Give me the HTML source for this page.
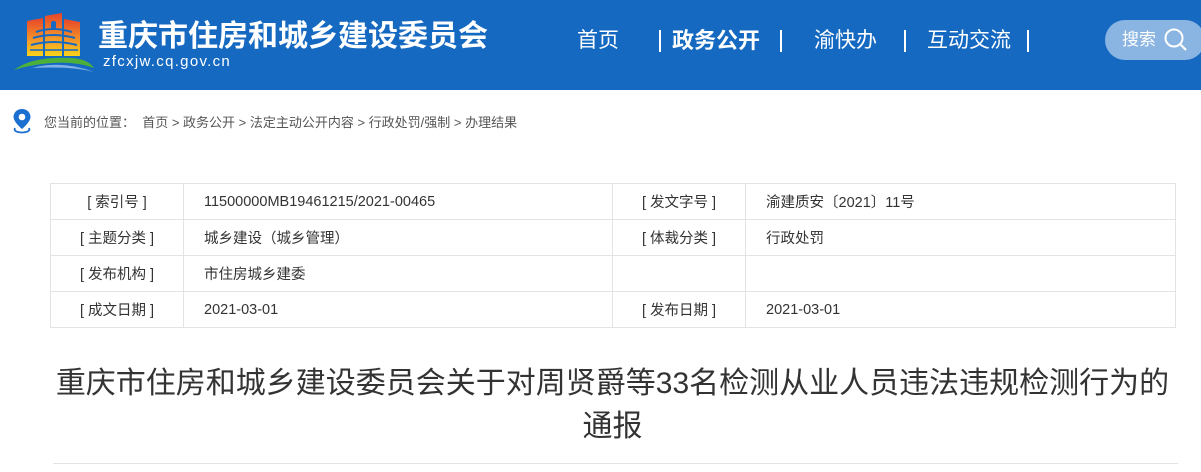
<!DOCTYPE html>
<html><head><meta charset="utf-8"><style>
*{margin:0;padding:0;box-sizing:border-box}
body{width:1201px;height:472px;overflow:hidden;background:#fff;font-family:"Liberation Sans","Noto Sans CJK SC",sans-serif;position:relative}
.hd{position:absolute;left:0;top:0;width:1201px;height:90px;background:#1569c1}
.t1{position:absolute;left:98px;top:17px;color:#fff;font-size:30px;font-weight:bold;white-space:nowrap;line-height:40px}
.t2{position:absolute;left:103px;top:53px;color:#fff;font-size:15px;letter-spacing:1.3px;white-space:nowrap}
.nav{position:absolute;top:27px;color:#fff;font-size:21px;white-space:nowrap;line-height:28px}
.bar{position:absolute;top:30px;width:2px;height:22px;background:#fff}
.srch{position:absolute;left:1105px;top:20px;width:100px;height:40px;border-radius:20px;background:#8ab4e2;color:#fff;font-size:17px;line-height:40px;padding-left:17px}
.bc{position:absolute;left:44px;top:112px;font-size:13px;color:#555;white-space:nowrap}
table{position:absolute;left:50px;top:183px;border-collapse:collapse;font-size:14.5px;color:#333}
td{border:1px solid #e3e3e3;height:36px;padding:0}
td.l{text-align:center}
td.v{padding-left:20px}
h1{position:absolute;left:0;top:362px;width:1225px;text-align:center;font-weight:normal;font-size:30px;line-height:43px;color:#333;white-space:nowrap}
.hr{position:absolute;left:53px;top:463px;width:1125px;height:1px;background:#e3e3e3}
</style></head><body>
<div class="hd">
<svg style="position:absolute;left:12px;top:10px" width="84" height="62" viewBox="0 0 84 62">
<defs><linearGradient id="g" x1="0" y1="0" x2="0" y2="1"><stop offset="0" stop-color="#e8452a"/><stop offset="0.6" stop-color="#f3992a"/><stop offset="1" stop-color="#f9d21a"/></linearGradient></defs>
<path d="M15 11 L31 8 V46 H15 Z" fill="url(#g)"/>
<path d="M33 6 L50 3 V46 H33 Z" fill="url(#g)"/>
<path d="M52 9 L68 12 V46 H52 Z" fill="url(#g)"/>
<rect x="39" y="11" width="5" height="8" rx="2" fill="#1569c1"/>
<path d="M24 22 Q41 16 60 22" stroke="#1569c1" stroke-width="2" fill="none"/>
<path d="M21 28 Q41 22 63 28" stroke="#1569c1" stroke-width="2" fill="none"/>
<path d="M19 35 Q41 29 65 35" stroke="#1569c1" stroke-width="2" fill="none"/>
<path d="M18 40 H66" stroke="#1569c1" stroke-width="1.5"/>
<path d="M2 60 Q20 46 60 48 Q76 49 82 58 Q60 50 30 54 Q14 56 2 60 Z" fill="#4caf3a"/>
<path d="M20 58 Q50 50 82 62 Q60 56 20 58 Z" fill="#7fb0e6"/>
</svg>
<div class="t1">重庆市住房和城乡建设委员会</div>
<div class="t2">zfcxjw.cq.gov.cn</div>
<div class="nav" style="left:577px">首页</div>
<div class="bar" style="left:659px"></div>
<div class="nav" style="left:672px;font-weight:bold;font-size:22px">政务公开</div>
<div class="bar" style="left:780px"></div>
<div class="nav" style="left:814px">渝快办</div>
<div class="bar" style="left:904px"></div>
<div class="nav" style="left:927px">互动交流</div>
<div class="bar" style="left:1027px"></div>
<div class="srch">搜索<svg style="position:absolute;left:58px;top:7px" width="26" height="26" viewBox="0 0 26 26"><circle cx="11" cy="11" r="8.5" stroke="#fff" stroke-width="2" fill="none"/><path d="M17 17 L23 23" stroke="#fff" stroke-width="2.2"/></svg></div>
</div>
<svg style="position:absolute;left:11px;top:108px" width="22" height="26" viewBox="0 0 22 26"><path d="M11 1 C5.5 1 2.5 5 2.5 9 C2.5 14 11 21 11 21 C11 21 19.5 14 19.5 9 C19.5 5 16.5 1 11 1 Z" fill="#1b6fd0"/><circle cx="11" cy="9" r="3.3" fill="#fff"/><path d="M4 20 Q2 24 11 24.5 Q20 24 18 20" stroke="#1b6fd0" stroke-width="1.8" fill="none"/></svg>
<div class="bc">您当前的位置：&nbsp;&nbsp;首页 &gt; 政务公开 &gt; 法定主动公开内容 &gt; 行政处罚/强制 &gt; 办理结果</div>
<table>
<tr><td class="l" style="width:133px">[ 索引号 ]</td><td class="v" style="width:429px">11500000MB19461215/2021-00465</td><td class="l" style="width:133px">[ 发文字号 ]</td><td class="v" style="width:430px">渝建质安〔2021〕11号</td></tr>
<tr><td class="l">[ 主题分类 ]</td><td class="v">城乡建设（城乡管理）</td><td class="l">[ 体裁分类 ]</td><td class="v">行政处罚</td></tr>
<tr><td class="l">[ 发布机构 ]</td><td class="v">市住房城乡建委</td><td class="l"></td><td class="v"></td></tr>
<tr><td class="l">[ 成文日期 ]</td><td class="v">2021-03-01</td><td class="l">[ 发布日期 ]</td><td class="v">2021-03-01</td></tr>
</table>
<h1>重庆市住房和城乡建设委员会关于对周贤爵等33名检测从业人员违法违规检测行为的<br>通报</h1>
<div class="hr"></div>
</body></html>
